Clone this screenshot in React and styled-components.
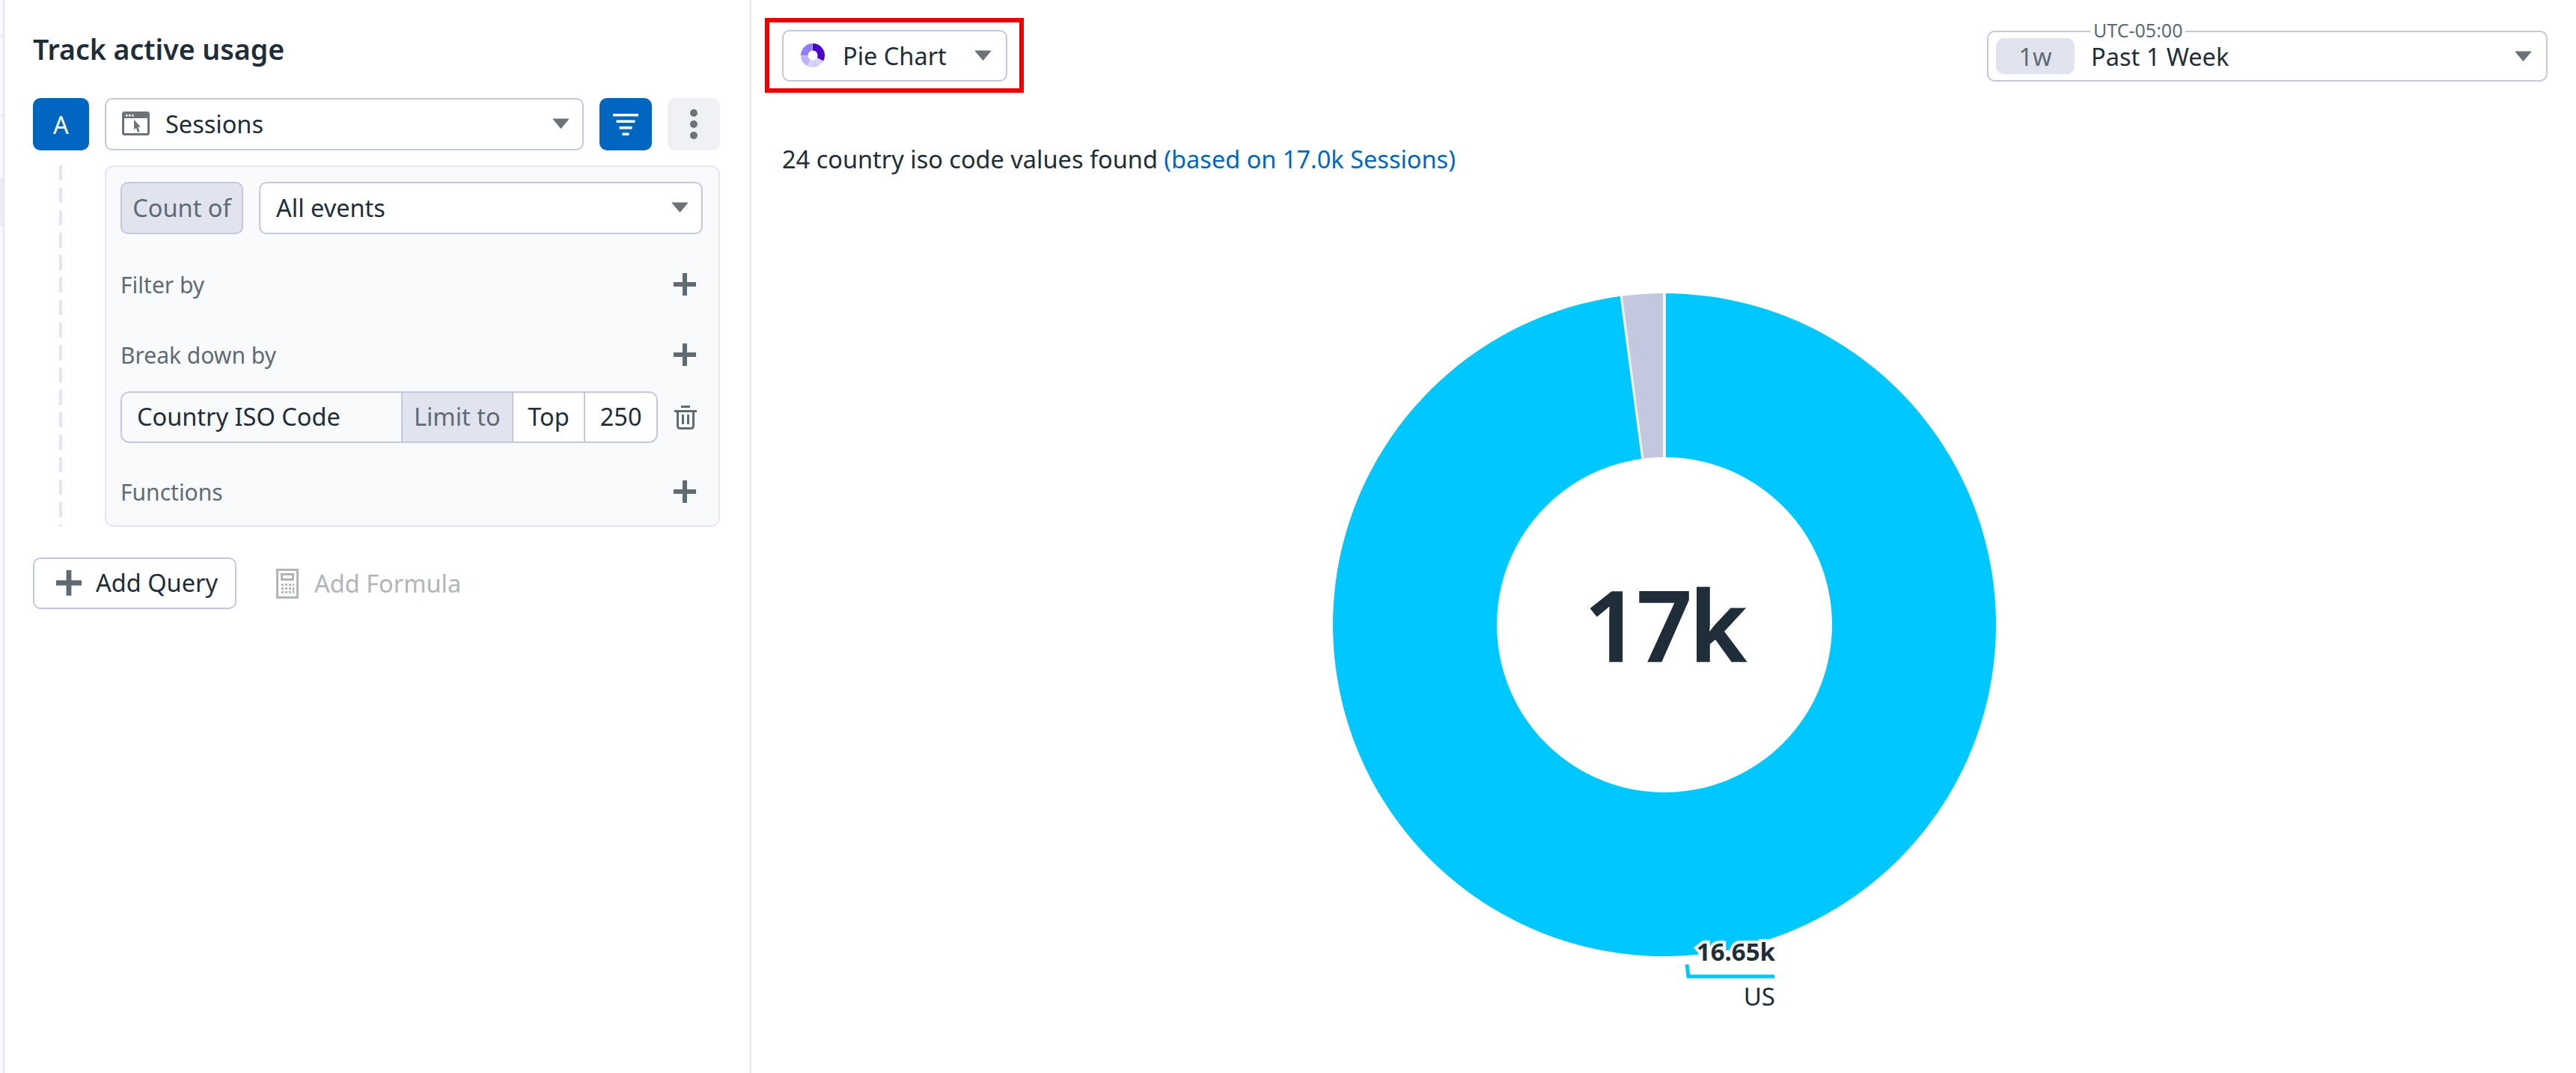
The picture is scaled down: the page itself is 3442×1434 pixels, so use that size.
import React from 'react'
import styled, { createGlobalStyle } from 'styled-components'

const GlobalStyle = createGlobalStyle`
  html, body { margin: 0; padding: 0; background: #fff; }
  body { font-family: "Noto Sans", "Open Sans", sans-serif; color: #1f2d38; }
  * { box-sizing: border-box; }
`;

const Page = styled.div`
  display: flex;
  width: 3442px;
  height: 1434px;
  overflow: hidden;
  background: #fff;
`;

const Rail = styled.div`
  width: 4px;
  flex: none;
  display: flex;
  flex-direction: column;
  background: #f9fafe;
`;

const RailStrip = styled.div`
  height: ${p => p.$h}px;
  margin-top: ${p => p.$top}px;
  background: #eceef3;
`;

const LeftPanel = styled.aside`
  width: 1000px;
  flex: none;
  padding: 44px 40px 0 38px;
  border-left: 2px solid #e2e2f0;
  border-right: 2px solid #e6e8f1;
`;

const Title = styled.h2`
  margin: 0 0 43px;
  font-size: 37.500px;
  line-height: 44px;
  font-weight: 600;
`;

const QueryRow = styled.div`
  display: flex;
  gap: 21px;
  height: 70px;
`;

const QueryLetter = styled.div`
  width: 75px;
  border-radius: 10px;
  background: #0066bf;
  color: #fff;
  font-size: 32.500px;
  display: flex;
  align-items: center;
  justify-content: center;
`;

const Select = styled.div`
  flex: 1;
  display: flex;
  align-items: center;
  gap: 21px;
  padding: 0 17px 2px 21px;
  height: 70px;
  border: 2px solid #c3c8de;
  border-radius: 10px;
  background: #fff;
  font-size: 32.500px;
  white-space: nowrap;
`;

const Grow = styled.span`
  flex: 1;
`;

const IconButton = styled.div`
  width: 70px;
  height: 70px;
  border-radius: 10px;
  background: ${p => p.$bg};
  display: flex;
  align-items: center;
  justify-content: center;
`;

const QueryBody = styled.div`
  display: flex;
  margin-top: 20px;
`;

const DashedLine = styled.div`
  width: 4px;
  margin: 0 57px 0 35px;
  background: repeating-linear-gradient(to bottom, #e2e4ee 0, #e2e4ee 20px, transparent 20px, transparent 30px);
`;

const QueryPanel = styled.div`
  width: 822px;
  height: 483px;
  padding: 20px 21px 0 19px;
  border: 2px solid #e6e8f1;
  border-radius: 12px;
  background: #f8fafc;
`;

const CountRow = styled.div`
  display: flex;
  gap: 21px;
`;

const CountLabel = styled.div`
  width: 164px;
  height: 70px;
  padding-bottom: 2px;
  display: flex;
  align-items: center;
  justify-content: center;
  border: 2px solid #c3c8de;
  border-radius: 10px;
  background: #e1e4ee;
  color: #5e6b73;
  font-size: 32.500px;
`;

const SectionRow = styled.div`
  display: flex;
  align-items: center;
  justify-content: space-between;
  height: 44px;
  margin-top: ${p => p.$top}px;
  padding-right: 9px;
  color: #5e6b73;
  font-size: 30px;
`;

const BreakdownRow = styled.div`
  display: flex;
  align-items: center;
  justify-content: space-between;
  margin-top: 27px;
  padding-right: 8px;
`;

const BreakdownGroup = styled.div`
  width: 718px;
  height: 69px;
  display: flex;
  border: 2px solid #c3c8de;
  border-radius: 12px;
  overflow: hidden;
  font-size: 32.500px;
`;

const Cell = styled.div`
  display: flex;
  align-items: center;
  justify-content: ${p => (p.$left ? 'flex-start' : 'center')};
  width: ${p => p.$w}px;
  padding: 0 0 2px ${p => (p.$left ? 20 : 0)}px;
  background: ${p => p.$bg || '#fff'};
  color: ${p => p.$color || '#1f2d38'};
  border-left: ${p => (p.$divider ? '2px solid #c3c8de' : 'none')};
  white-space: nowrap;
`;

const ActionRow = styled.div`
  display: flex;
  align-items: center;
  gap: 53px;
  margin-top: 41px;
`;

const AddQueryButton = styled.div`
  width: 272px;
  height: 69px;
  display: flex;
  align-items: center;
  gap: 19px;
  padding: 0 0 2px 29px;
  border: 2px solid #c3c8de;
  border-radius: 10px;
  font-size: 32.500px;
`;

const AddFormula = styled.div`
  display: flex;
  align-items: center;
  gap: 21px;
  color: #b0b5b8;
  font-size: 32.500px;
`;

const RightPanel = styled.main`
  flex: 1;
  display: flex;
  flex-direction: column;
`;

const Toolbar = styled.div`
  display: flex;
  justify-content: space-between;
  align-items: flex-start;
  padding: 24px 38px 0 18px;
`;

const Highlight = styled.div`
  width: 346px;
  height: 100px;
  padding-left: 17px;
  display: flex;
  align-items: center;
  border: 6px solid #ee0000;
`;

const ChartTypeButton = styled.div`
  width: 301px;
  height: 69px;
  display: flex;
  align-items: center;
  padding: 0 19px 0 23px;
  border: 2px solid #c3c8de;
  border-radius: 10px;
  font-size: 32.500px;
  white-space: nowrap;
`;

const ChartTypeLabel = styled.span`
  flex: 1;
  margin-left: 24px;
`;

const TimePicker = styled.div`
  position: relative;
  width: 749px;
  height: 68px;
  margin-top: 17px;
  display: flex;
  align-items: center;
  padding: 0 19px 0 10px;
  border: 2px solid #c3c8de;
  border-radius: 10px;
  font-size: 32.500px;
`;

const TimeZone = styled.span`
  position: absolute;
  top: -18px;
  left: 136px;
  padding: 0 4px;
  background: #fff;
  color: #5e6b73;
  font-size: 25px;
  line-height: 30px;
`;

const RangeChip = styled.span`
  width: 105px;
  height: 48px;
  margin-right: 22px;
  display: flex;
  align-items: center;
  justify-content: center;
  border-radius: 10px;
  background: #e1e4ee;
  color: #5e6b73;
`;

const Summary = styled.div`
  margin: 67px 0 0 41px;
  font-size: 32.500px;
  line-height: 44px;
`;

const SummaryLink = styled.span`
  color: #0067c0;
`;

const ChartArea = styled.div`
  display: flex;
  justify-content: center;
  margin-top: 155px;
  padding-left: 2px;
`;

const Donut = styled.div`
  position: relative;
  width: 890px;
  height: 960px;
`;

const CenterValue = styled.div`
  position: absolute;
  left: 0;
  top: 0;
  width: 888px;
  height: 886px;
  display: flex;
  align-items: center;
  justify-content: center;
  font-size: 130px;
  font-weight: 600;
  letter-spacing: -4px;
  -webkit-text-stroke: 1.500px #1f2d38;
`;

const Callout = styled.div`
  position: absolute;
  right: 297px;
  top: 864px;
  text-align: right;
  font-size: 33px;
  line-height: 36px;
`;

const CalloutValue = styled.div`
  margin-bottom: 24px;
  font-weight: 700;
  font-size: 33px;
  -webkit-text-stroke: 8px #fff;
  paint-order: stroke fill;
`;

const Caret = () => (
  <svg width="23" height="14" viewBox="0 0 23 14">
    <path d="M1 1h21L11.500 13.500z" fill="#6b7378" stroke="#6b7378" strokeWidth="1" strokeLinejoin="round" />
  </svg>
)

const Plus = ({ size = 30, color = '#5e6b73' }) => (
  <svg width={size} height={size} viewBox="0 0 30 30">
    <path d="M12 0h6v12h12v6H18v12h-6V18H0v-6h12z" fill={color} />
  </svg>
)

const SessionsIcon = () => (
  <svg width="37" height="32" viewBox="0 0 37 32">
    <rect x="1.500" y="1.500" width="34" height="29" rx="2" fill="#fff" stroke="#6b7378" strokeWidth="3" />
    <rect x="1" y="1" width="35" height="8" rx="2" fill="#6b7378" />
    <path d="M5 4h2.500v2.500H5zM9 4h2.500v2.500H9zM13 4h2.500v2.500H13z" fill="#fff" />
    <path d="M16 11l9 9.500-3.500.3 2 6-2.500 1-2-6-3 2.500z" fill="#6b7378" />
  </svg>
)

const FilterIcon = () => (
  <svg width="34" height="29" viewBox="0 0 34 29" fill="#fff">
    <rect x="0" y="0" width="34" height="3.500" />
    <rect x="4.500" y="8.500" width="25" height="3.500" />
    <rect x="8.500" y="17" width="17" height="3.500" />
    <rect x="12.500" y="25.500" width="9" height="3.500" />
  </svg>
)

const DotsIcon = () => (
  <svg width="10" height="40" viewBox="0 0 10 40" fill="#6b7378">
    <circle cx="5" cy="5" r="5" />
    <circle cx="5" cy="20" r="5" />
    <circle cx="5" cy="35" r="5" />
  </svg>
)

const TrashIcon = () => (
  <svg width="30" height="32" viewBox="0 0 30 32" fill="none" stroke="#5e6b73">
    <path d="M9 1.500h12M0 7.500h30" strokeWidth="3" />
    <path d="M4.500 7.500v20a3 3 0 0 0 3 3h15a3 3 0 0 0 3-3v-20" strokeWidth="3" />
    <path d="M11.500 12v13M18.500 12v13" strokeWidth="3" />
  </svg>
)

const CalculatorIcon = () => (
  <svg width="30" height="40" viewBox="0 0 30 40" fill="#b0b5b8">
    <path fillRule="evenodd" d="M0 0h30v40H0zM3 3v34h24V3z" />
    <path fillRule="evenodd" d="M6 6h18v10H6zM9 9v4h12V9z" />
    <path d="M7 20h3v3H7zM12 20h3v3h-3zM17 20h3v3h-3zM22 20h2v3h-2zM7 25h3v3H7zM12 25h3v3h-3zM17 25h3v3h-3zM7 30h3v3H7zM12 30h3v3h-3zM17 30h3v3h-3zM22 25h2v8h-2z" />
  </svg>
)

const polar = (cx, cy, r, deg) => {
  const a = (deg - 90) * Math.PI / 180
  return [cx + r * Math.cos(a), cy + r * Math.sin(a)]
}

const ringPath = (cx, cy, R, r, from, to) => {
  const large = to - from > 180 ? 1 : 0
  const [x0, y0] = polar(cx, cy, R, from)
  const [x1, y1] = polar(cx, cy, R, to)
  const [x2, y2] = polar(cx, cy, r, to)
  const [x3, y3] = polar(cx, cy, r, from)
  return `M${x0} ${y0}A${R} ${R} 0 ${large} 1 ${x1} ${y1}L${x2} ${y2}A${r} ${r} 0 ${large} 0 ${x3} ${y3}Z`
}

const pieIconSlices = [
  { from: 0, to: 118, fill: '#4a00c8' },
  { from: 120, to: 150, fill: '#d8d2ff' },
  { from: 152, to: 178, fill: '#cfc8ff' },
  { from: 180, to: 205, fill: '#d8d2ff' },
  { from: 207, to: 268, fill: '#bdb2ff' },
  { from: 270, to: 358, fill: '#8f7dff' },
]

const PieIcon = () => (
  <svg width="32" height="32" viewBox="0 0 32 32">
    {pieIconSlices.map(s => (
      <path key={s.from} d={ringPath(16, 16, 16, 6.500, s.from, s.to)} fill={s.fill} />
    ))}
  </svg>
)

const DonutChart = () => {
  const [gapX, gapY] = polar(445, 445, 446, -7.5)
  const [innerX, innerY] = polar(445, 445, 222, -7.5)
  return (
    <svg width="890" height="960" viewBox="0 0 890 960">
      <path d={ringPath(445, 445, 443, 224, 0, 352.5)} fill="#00c8ff" />
      <path d={ringPath(445, 445, 443, 224, 352.5, 360)} fill="#c3c8de" />
      <path d="M445 0V225" stroke="#fff" strokeWidth="3.500" />
      <path d={`M${gapX} ${gapY}L${innerX} ${innerY}`} stroke="#fff" strokeWidth="3" />
      <path d="M475 899L477 915H592" fill="none" stroke="#00c8ff" strokeWidth="5" />
    </svg>
  )
}

const App = () => {
  return (
    <Page>
      <GlobalStyle />
      <Rail>
        <RailStrip $top={47} $h={3} />
        <RailStrip $top={103} $h={2} />
        <RailStrip $top={83} $h={64} />
      </Rail>
      <LeftPanel>
        <Title>Track active usage</Title>
        <QueryRow>
          <QueryLetter>A</QueryLetter>
          <Select>
            <SessionsIcon />
            <Grow>Sessions</Grow>
            <Caret />
          </Select>
          <IconButton $bg="#0066bf"><FilterIcon /></IconButton>
          <IconButton $bg="#eff0f4"><DotsIcon /></IconButton>
        </QueryRow>
        <QueryBody>
          <DashedLine />
          <QueryPanel>
            <CountRow>
              <CountLabel>Count of</CountLabel>
              <Select>
                <Grow>All events</Grow>
                <Caret />
              </Select>
            </CountRow>
            <SectionRow $top={45}>Filter by<Plus /></SectionRow>
            <SectionRow $top={50}>Break down by<Plus /></SectionRow>
            <BreakdownRow>
              <BreakdownGroup>
                <Cell $w={374} $left $bg="#f8fafc">Country ISO Code</Cell>
                <Cell $w={148} $bg="#e1e4ee" $color="#5e6b73" $divider>Limit to</Cell>
                <Cell $w={97} $divider>Top</Cell>
                <Cell $w={97} $divider>250</Cell>
              </BreakdownGroup>
              <TrashIcon />
            </BreakdownRow>
            <SectionRow $top={43}>Functions<Plus /></SectionRow>
          </QueryPanel>
        </QueryBody>
        <ActionRow>
          <AddQueryButton><Plus size={34} />Add Query</AddQueryButton>
          <AddFormula><CalculatorIcon />Add Formula</AddFormula>
        </ActionRow>
      </LeftPanel>
      <RightPanel>
        <Toolbar>
          <Highlight>
            <ChartTypeButton>
              <PieIcon />
              <ChartTypeLabel>Pie Chart</ChartTypeLabel>
              <Caret />
            </ChartTypeButton>
          </Highlight>
          <TimePicker>
            <TimeZone>UTC-05:00</TimeZone>
            <RangeChip>1w</RangeChip>
            <Grow>Past 1 Week</Grow>
            <Caret />
          </TimePicker>
        </Toolbar>
        <Summary>24 country iso code values found <SummaryLink>(based on 17.0k Sessions)</SummaryLink></Summary>
        <ChartArea>
          <Donut>
            <DonutChart />
            <CenterValue>17k</CenterValue>
            <Callout>
              <CalloutValue>16.65k</CalloutValue>
              <div>US</div>
            </Callout>
          </Donut>
        </ChartArea>
      </RightPanel>
    </Page>
  )
}

export default App
